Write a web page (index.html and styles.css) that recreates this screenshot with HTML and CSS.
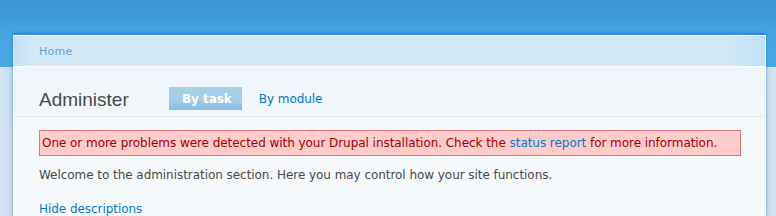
FILE: index.html
```html
<!DOCTYPE html>
<html>
<head>
<meta charset="utf-8">
<link rel="stylesheet" href="styles.css">
</head>
<body>
<div class="page">
  <div class="card">
    <div class="breadcrumb"><a href="#">Home</a></div>
    <div class="title-row">
      <h1 class="title">Administer</h1>
      <ul class="tabs">
        <li class="tab active"><a href="#">By task</a></li>
        <li class="tab"><a href="#">By module</a></li>
      </ul>
    </div>
    <div class="content">
      <div class="messages error">One or more problems were detected with your Drupal installation. Check the <a href="#">status report</a> for more information.</div>
      <p class="intro">Welcome to the administration section. Here you may control how your site functions.</p>
      <p class="toggle"><a href="#">Hide descriptions</a></p>
    </div>
  </div>
</div>
</body>
</html>
```
FILE: styles.css
```css
html, body {
  margin: 0;
  padding: 0;
}
body {
  width: 776px;
  height: 216px;
  overflow: hidden;
  font-family: "DejaVu Sans", Verdana, sans-serif;
  font-size: 12px;
  letter-spacing: -0.05px;
  color: #494949;
  background:
    linear-gradient(to right, #d6e7f4 0px, #c2daed 12px, #c2daed 13px, transparent 13px) 0 67px / 13px 149px no-repeat,
    linear-gradient(to right, #c4dbed 0px, #d4e6f3 10px) 766px 67px / 10px 149px no-repeat,
    linear-gradient(to bottom, #3a95d3 0px, #3f9cd9 20px, #47a6e1 33px, #48a6e3 67px) 0 0 / 776px 67px no-repeat,
    #cfe2f1;
}
a {
  color: #027ac6;
  text-decoration: none;
}
.page {
  padding-top: 35px;
  padding-left: 13px;
}
.card {
  width: 752px;
  border-top: 1px solid #ffffff;
  border-right: 1px solid #ffffff;
  box-shadow: 0 -2px 3px rgba(20, 100, 210, 0.55);
  background: linear-gradient(to bottom, #ecf3fb 0px, #f5f9fc 100px, #f7fafd 180px);
}
.breadcrumb {
  height: 30px;
  border-bottom: 1px solid #ffffff;
  background:
    linear-gradient(to right, #c4e0f6 0px, #d4e9f8 22px, #d4e9f8 710px, #c1e0f6 752px);
  padding-left: 26px;
  line-height: 31px;
  font-size: 11px;
}
.breadcrumb a {
  color: #5aa2dc;
  letter-spacing: 0.3px;
}
.title-row {
  display: flex;
  align-items: flex-end;
  height: 49px;
  padding-left: 26px;
  border-bottom: 1px solid #e2ebf4;
}
.title {
  margin: 0 0 4px 0;
  font-family: "Liberation Sans", Arial, sans-serif;
  font-weight: normal;
  font-size: 19px;
  letter-spacing: 0;
  color: #494949;
  width: 130px;
  line-height: 24px;
}
.tabs {
  display: flex;
  list-style: none;
  margin: 0 0 6px 0;
  padding: 0;
}
.tab a {
  display: block;
  height: 23px;
  line-height: 24px;
  padding: 0 10px;
  font-size: 12px;
}
.tab.active a {
  color: #ffffff;
  font-weight: bold;
  padding: 0 10px 0 13px;
  background: linear-gradient(to bottom, #a9d0e9 0px, #a4cbe8 14px, #89bbe0 23px);
  margin-right: 7px;
}
.content {
  padding: 0 26px;
}
.messages.error {
  margin: 13px 0 0 0;
  width: 698px;
  height: 24px;
  line-height: 24px;
  padding-left: 2px;
  background: #ffcccc;
  border: 1px solid #dd7777;
  color: #a30000;
  font-size: 12px;
  white-space: nowrap;
}
.intro {
  margin: 10px 0 0 0;
  line-height: 18px;
}
.toggle {
  margin: 16px 0 0 0;
  line-height: 18px;
}
```
